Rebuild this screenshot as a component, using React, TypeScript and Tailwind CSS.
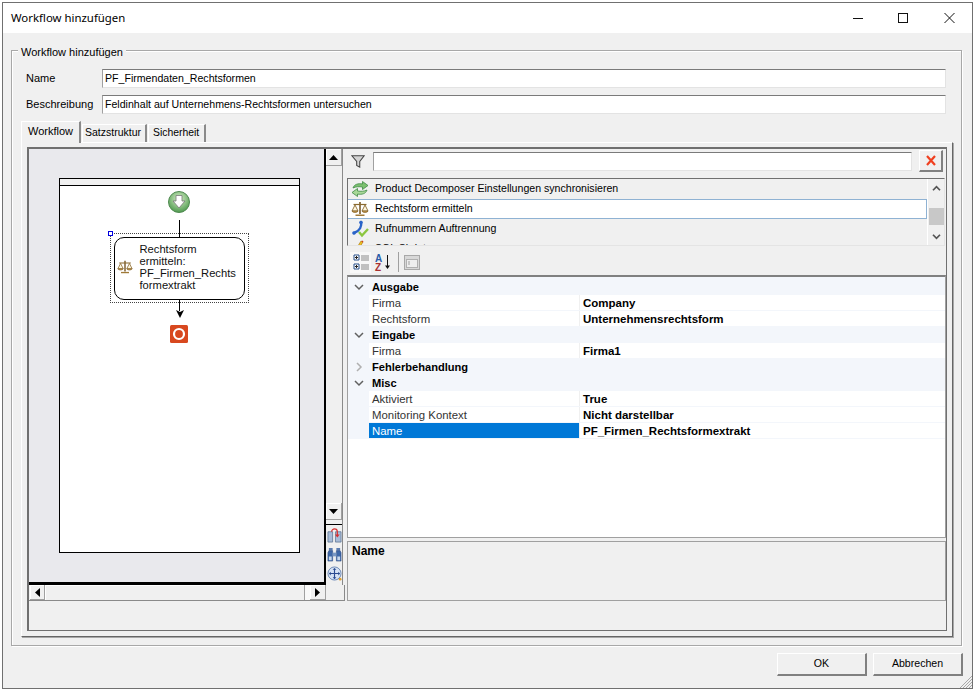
import React from "react";

const ui = "font-['Liberation_Sans',Arial,sans-serif] text-[11px]";

function Scales({ className = "" }: { className?: string }) {
  return (
    <svg viewBox="0 0 18 18" className={className}>
      <path d="M9 2v12" stroke="#7a5a28" strokeWidth="1.6" />
      <path d="M2.5 4.500h13" stroke="#8a6a30" strokeWidth="1.2" />
      <path d="M4 5 1 11h6zM14 5l-3 6h6z" fill="#fff7e0" stroke="#8a6a30" strokeWidth=".9" />
      <path d="M1 11c.6 2 5.400 2 6 0zM11 11c.6 2 5.400 2 6 0z" fill="#c89a48" stroke="#7a5a28" strokeWidth=".6" />
      <path d="M4.500 14.500h9v1.500h-9z" fill="#a07a38" />
    </svg>
  );
}

function Sync() {
  return (
    <svg viewBox="0 0 18 18" className="w-[18px] h-[18px]">
      <path d="M2 8c1-3.500 5-5 9.500-4V1.500L17 5.500l-5.500 4V7C8 6.500 5 6.500 2 8z" fill="#7cc070" stroke="#3f8a45" strokeWidth=".8" />
      <path d="M16 10c-1 3.500-5 5-9.500 4v2.500L1 12.500l5.500-4V11c3.500.5 6.500.5 9.500-1z" fill="#a8d898" stroke="#3f8a45" strokeWidth=".8" />
    </svg>
  );
}

function Phone() {
  return (
    <svg viewBox="0 0 18 18" className="w-[18px] h-[18px]">
      <path d="M10 2c1 4-1 9-7 11" fill="none" stroke="#2a63c8" strokeWidth="2.400" strokeLinecap="round" />
      <circle cx="10" cy="2.500" r="1.800" fill="#2a63c8" />
      <circle cx="3" cy="13" r="1.800" fill="#2a63c8" />
      <path d="m8 12 3 3.500 6-6.500" fill="none" stroke="#8cc63f" strokeWidth="2.400" />
    </svg>
  );
}

function Pencil() {
  return (
    <svg viewBox="0 0 18 18" className="w-[18px] h-[18px]">
      <path d="M10 1 5 9l2 1 5-8z" fill="#f0c020" stroke="#a07010" strokeWidth=".6" />
      <path d="M11 1l1 1" stroke="#d04020" strokeWidth="1.500" />
    </svg>
  );
}

function ArrowBtn({ dir, className = "" }: { dir: "up" | "down" | "left" | "right"; className?: string }) {
  const p = { up: "M0 5 4.500 0 9 5z", down: "M0 0h9L4.500 5z", left: "M5 0v9L0 4.500z", right: "M0 0v9l5-4.500z" }[dir];
  const box = dir === "up" || dir === "down" ? "0 0 9 5" : "0 0 5 9";
  const size = dir === "up" || dir === "down" ? "w-[9px] h-[5px]" : "w-[5px] h-[9px]";
  return (
    <div className={`flex items-center justify-center bg-[#f0f0f0] border-r border-b border-[#a0a0a0] shadow-[inset_1px_1px_0_#ffffff] shrink-0 ${className}`}>
      <svg viewBox={box} className={size}>
        <path d={p} fill="#000" />
      </svg>
    </div>
  );
}

function Category({ label, open = true }: { label: string; open?: boolean }) {
  return (
    <div className="h-[16px] flex items-center bg-[#f3f6fb] shrink-0">
      <div className="w-[21px] flex justify-center mr-[3px]">
        <svg viewBox="0 0 10 10" className="w-[10px] h-[10px]">
          {open ? (
            <path d="M1 3l4 4 4-4" fill="none" stroke="#606060" strokeWidth="1.500" />
          ) : (
            <path d="M3 1l4 4-4 4" fill="none" stroke="#b0b0b0" strokeWidth="1.500" />
          )}
        </svg>
      </div>
      <span className="font-bold text-black text-[11.1px]">{label}</span>
    </div>
  );
}

function Prop({ k, v, selected = false }: { k: string; v: string; selected?: boolean }) {
  return (
    <div className="h-[16px] flex bg-[#f3f6fb] shrink-0">
      <div className="w-[21px]" />
      <div className={`w-[211px] pl-[3px] leading-[17px] h-[15px] text-[11.4px] border-r border-[#f0f0f0] ${selected ? "bg-[#0078d7] text-white" : "bg-white text-[#333]"}`}>{k}</div>
      <div className="flex-1 pl-[3px] leading-[17px] h-[15px] bg-white font-bold text-black text-[11.5px]">{v}</div>
    </div>
  );
}

function SunkenInput({ value, className = "" }: { value: string; className?: string }) {
  return (
    <div className={`h-[19px] bg-white border border-[#e3e3e3] border-t-[#7a7a7a] border-l-[#a0a0a0] pl-[2px] leading-[17px] text-[10.6px] text-black whitespace-pre ${className}`}>
      {value}
    </div>
  );
}

export default function App() {
  const raised = "flex items-center justify-center bg-[#f0f0f0] border border-white border-r-2 border-b-2 border-r-[#808080] border-b-[#808080] text-black";
  return (
    <div className={`${ui} w-[978px] h-[693px] bg-white pt-[2px] pl-[2px] overflow-hidden text-[#111]`}>
      <div className="w-[971px] h-[687px] border border-[#707070] flex flex-col bg-[#f0f0f0]">
        {/* title bar */}
        <div className="h-[30px] bg-white flex items-center pl-[8px] shrink-0">
          <span className="flex-1 font-['Noto_Sans',sans-serif] text-[11.4px] text-black">Workflow hinzufügen</span>
          <div className="flex items-center pb-[1px] mr-[2px]">
            <svg viewBox="0 0 45 12" className="w-[45px] h-[12px]"><path d="M0 6.500h10" stroke="#111" /></svg>
            <svg viewBox="0 0 46 12" className="w-[46px] h-[12px]"><rect x="0.500" y="1.500" width="9" height="9" fill="none" stroke="#111" /></svg>
            <svg viewBox="0 0 24 12" className="w-[24px] h-[12px] mr-[2px]"><path d="M.5 1l10 10M10.500 1l-10 10" stroke="#111" /></svg>
          </div>
        </div>

        <div className="flex-1 flex flex-col px-[8px] pt-[17px]">
          {/* group box */}
          <div className="relative w-[951px] h-[596px] border border-[#a8a8a8] shadow-[inset_1px_1px_0_#ffffff,1px_1px_0_#ffffff] px-[9px] pt-[18px] shrink-0">
            <span className="absolute left-[6px] -top-[5px] bg-[#f0f0f0] px-[3px] leading-[13px] text-black">Workflow hinzufügen</span>

            <div className="flex items-center h-[19px] pl-[5px]">
              <span className="w-[76px] text-black">Name</span>
              <SunkenInput value="PF_Firmendaten_Rechtsformen" className="w-[844px]" />
            </div>
            <div className="flex items-center h-[19px] pl-[5px] mt-[7px]">
              <span className="w-[76px] text-black">Beschreibung</span>
              <SunkenInput value="Feldinhalt auf Unternehmens-Rechtsformen untersuchen" className="w-[844px]" />
            </div>

            {/* tabs */}
            <div className="flex items-end h-[21px] mt-[7px] gap-[1px]">
              <div className="w-[60px] h-[22px] -mb-px relative z-10 bg-[#f0f0f0] border-t border-l border-white border-r-2 border-r-[#8a8a8a] pl-[6px] leading-[19px] text-black">Workflow</div>
              <div className="w-[65px] h-[18px] bg-[#f0f0f0] border-t border-l border-white border-r-2 border-r-[#8a8a8a] pl-[2px] leading-[15px] text-[10.5px] text-black">Satzstruktur</div>
              <div className="w-[58px] h-[18px] bg-[#f0f0f0] border-t border-l border-white border-r-2 border-r-[#8a8a8a] pl-[4px] leading-[15px] text-[10.4px] text-black">Sicherheit</div>
            </div>

            {/* tab panel */}
            <div className="w-[932px] h-[495px] border-t border-l border-white border-r border-b border-r-[#666666] border-b-[#666666] shadow-[1px_1px_0_#a8a8a8] px-[5px] pt-[4px]">
              <div className="w-[920px] h-[484px] border-t-2 border-l-2 border-r border-b border-[#707070] flex">
                {/* designer */}
                <div className="w-[316px] flex flex-col shrink-0">
                  <div className="flex h-[436px]">
                    <div className="w-[297px] bg-[#e9e9ed] border-r-2 border-b-[3px] border-black pl-[30px] pt-[29px] relative">
                      <div className="w-[241px] h-[375px] bg-white border border-black relative">
                        <div className="h-[7px] bg-[#f0f0f0] border-b border-black" />

                        {/* diagram */}
                        <svg viewBox="0 0 24 24" className="absolute left-[107px] top-[11px] w-[24px] h-[24px]">
                          <defs>
                            <radialGradient id="g" cx="50%" cy="35%" r="65%">
                              <stop offset="0" stopColor="#d8f0c8" />
                              <stop offset="1" stopColor="#4f9a4f" />
                            </radialGradient>
                          </defs>
                          <circle cx="12" cy="12" r="10.500" fill="url(#g)" stroke="#4f8a50" />
                          <path d="M9 5.500h6v5.500h3l-6 7-6-7h3z" fill="#fff" stroke="#777" strokeWidth=".8" />
                        </svg>
                        <div className="absolute left-[119px] top-[41px] w-[1px] h-[17px] bg-black" />
                        <div className="absolute left-[50px] top-[54px] w-[139px] h-[70px] border border-dotted border-[#444]" />
                        <div className="absolute left-[48px] top-[52px] w-[5px] h-[5px] bg-white border border-[#0000e0]" />
                        <div className="absolute left-[54px] top-[58px] w-[131px] h-[63px] border-[1.5px] border-black rounded-[10px] bg-white flex items-center pl-[24.500px] pb-[4px]">
                          <div className="absolute left-[2px] top-[21px]">
                            <Scales className="w-[16px] h-[16px]" />
                          </div>
                          <div className="leading-[12px] text-[11.2px] text-[#111] whitespace-nowrap">
                            Rechtsform<br />ermitteln:<br />PF_Firmen_Rechts<br />formextrakt
                          </div>
                        </div>
                        <div className="absolute left-[119px] top-[121px] w-[1px] h-[11px] bg-black" />
                        <svg viewBox="0 0 8 8" className="absolute left-[116px] top-[131px] w-[8px] h-[8px]"><path d="M0 0 4 2 8 0 4 8z" fill="#000" /></svg>
                        <svg viewBox="0 0 18 18" className="absolute left-[110px] top-[146px] w-[18px] h-[18px]">
                          <rect width="18" height="18" rx="1.500" fill="#d8481f" />
                          <circle cx="9" cy="9" r="5" fill="none" stroke="#fff" strokeWidth="2.200" />
                        </svg>
                      </div>
                    </div>
                    <div className="w-[17px] flex flex-col bg-[#f0f0f0] shrink-0 border-r border-[#8a8a8a]">
                      <ArrowBtn dir="up" className="h-[17px]" />
                      <div className="h-[337px] shrink-0" />
                      <ArrowBtn dir="down" className="h-[17px]" />
                      <div className="h-[5px] border-b border-black shrink-0" />
                      <div className="flex-1 flex flex-col items-center gap-[4px] pt-[3px]">
                        <svg viewBox="0 0 16 16" className="w-[15px] h-[15px]">
                          <path d="M1 4h5v11H1zM9 4h6v11H9z" fill="#a8bcd8" stroke="#5a7090" strokeWidth=".8" />
                          <path d="M5 4c0-4 6-4 6 0v4" fill="none" stroke="#d83030" strokeWidth="1.300" />
                          <path d="m8.500 7 2.500 3 2.500-3z" fill="#d83030" />
                        </svg>
                        <svg viewBox="0 0 16 16" className="w-[15px] h-[15px]">
                          <path d="M2 1h4v3H2zM10 1h4v3h-4z" fill="#5a7cb0" />
                          <path d="M1 6l1-2h4v11H1zM15 6l-1-2h-4v11h5z" fill="#3f68a8" stroke="#2a4a80" strokeWidth=".6" />
                          <path d="M6 6h4v4H6z" fill="#7a98c4" />
                          <path d="M2 10h3v4H2zM11 10h3v4h-3z" fill="#c8d8ec" />
                        </svg>
                        <svg viewBox="0 0 16 16" className="w-[15px] h-[15px]">
                          <circle cx="8" cy="8" r="7" fill="#d6e2f4" stroke="#6a86b4" />
                          <path d="M8 3v10M3 8h10" stroke="#2a4a90" strokeWidth="1.200" />
                          <path d="M8 2l2 2H6zM8 14l2-2H6zM2 8l2-2v4zM14 8l-2-2v4z" fill="#2a4a90" />
                          <circle cx="14" cy="14" r="1.500" fill="#e0a030" />
                        </svg>
                      </div>
                    </div>
                  </div>
                  <div className="flex h-[16px] border-b border-[#8a8a8a] shrink-0">
                    <div className="w-px" />
                    <ArrowBtn dir="left" className="w-[15px] h-[15px]" />
                    <div className="w-[260px] bg-[#f0f0f0] border-r border-[#a0a0a0] shadow-[inset_1px_1px_0_#ffffff]" />
                    <div className="w-[5px] bg-[#f8f8f8]" />
                    <ArrowBtn dir="right" className="w-[16px] h-[15px]" />
                    <div className="flex-1 border-r border-[#8a8a8a]" />
                  </div>
                </div>

                {/* right pane */}
                <div className="flex-1 flex flex-col min-w-0">
                  <div className="flex items-center h-[24px]">
                    <svg viewBox="0 0 16 16" className="w-[14px] h-[14px] ml-[6px]">
                      <path d="M1 2h14L10 8.500V15L6.500 13V8.500z" fill="#d4d4d4" stroke="#444" strokeWidth="1.200" />
                    </svg>
                    <SunkenInput value="" className="w-[539px] ml-[8px]" />
                    <div className={`w-[24px] h-[22px] ml-[7px] ${raised}`}>
                      <svg viewBox="0 0 10 11" className="w-[10px] h-[11px]">
                        <path d="M1 1l8 9M9 1l-8 9" stroke="#f04020" strokeWidth="2.200" />
                      </svg>
                    </div>
                  </div>

                  {/* list */}
                  <div className="h-[68px] w-[598px] mt-[5px] ml-[2px] border-t border-l border-[#707070] border-b border-b-[#e4e4e4] border-r border-r-[#e4e4e4] flex overflow-hidden text-[10.6px] text-black">
                    <div className="w-[579px] flex flex-col">
                      <div className="h-[20px] flex items-center shrink-0"><span className="w-[27px] pl-[3px] flex"><Sync /></span>Product Decomposer Einstellungen synchronisieren</div>
                      <div className="h-[20px] flex items-center shrink-0 bg-white border border-[#8fb2d3] -ml-px"><span className="w-[27px] pl-[3px] flex"><Scales className="w-[18px] h-[18px]" /></span>Rechtsform ermitteln</div>
                      <div className="h-[20px] flex items-center shrink-0"><span className="w-[27px] pl-[3px] flex"><Phone /></span>Rufnummern Auftrennung</div>
                      <div className="h-[20px] flex items-center shrink-0"><span className="w-[27px] pl-[3px] flex"><Pencil /></span>SQL Skript</div>
                    </div>
                    <div className="w-[17px] border-l border-white flex flex-col items-center bg-[#f0f0f0]">
                      <svg viewBox="0 0 10 8" className="w-[9px] h-[7px] mt-[6px]"><path d="M1 6l4-4 4 4" fill="none" stroke="#555" strokeWidth="2" /></svg>
                      <div className="w-[15px] h-[17px] bg-[#c8c8c8] mt-[16px]" />
                      <svg viewBox="0 0 10 8" className="w-[9px] h-[7px] mt-[8px]"><path d="M1 2l4 4 4-4" fill="none" stroke="#555" strokeWidth="2" /></svg>
                    </div>
                  </div>

                  {/* toolbar */}
                  <div className="h-[26px] flex items-center ml-[5px] mt-[3px] shrink-0">
                    <div className="w-[21px] h-[21px] bg-[#f8f8f8] flex items-center justify-center">
                      <svg viewBox="0 0 18 18" className="w-[18px] h-[18px]">
                        <path d="M2 2h5v5H2zM2 11h5v5H2z" fill="#fff" stroke="#29508a" />
                        <path d="M3 4.500h3M4.500 3v3M3 13.500h3M4.500 12v3" stroke="#222" />
                        <path d="M9 3h8M9 5h8M9 7h8M9 12h8M9 14h8M9 16h8" stroke="#8a8a8a" />
                      </svg>
                    </div>
                    <svg viewBox="0 0 17 18" className="w-[17px] h-[18px] ml-[3px]">
                      <text x="1" y="8.500" fontSize="10" fontWeight="bold" fill="#2a5ca8" fontFamily="'Liberation Sans'">A</text>
                      <text x="1" y="17.500" fontSize="10" fontWeight="bold" fill="#a83030" fontFamily="'Liberation Sans'">Z</text>
                      <path d="M13.500 2v13" stroke="#111" />
                      <path d="M11 12.500h5l-2.500 3.500z" fill="#111" />
                    </svg>
                    <div className="w-px h-[20px] bg-[#a0a0a0] ml-[7px]" />
                    <svg viewBox="0 0 16 15" className="w-[16px] h-[15px] ml-[5px]">
                      <rect x=".5" y=".5" width="15" height="14" fill="#d8d8d8" stroke="#a8a8a8" />
                      <rect x="2.500" y="4.500" width="11" height="8" fill="#eee" stroke="#b0b0b0" />
                      <path d="M4 7h2M4 9h2" stroke="#a0a0a0" />
                    </svg>
                  </div>

                  {/* grid */}
                  <div className="w-[599px] h-[263px] ml-[2px] border-t-2 border-l border-r border-b border-[#a0a0a0] border-t-[#808080] bg-white flex flex-col overflow-hidden shrink-0">
                    <div className="h-[2px] bg-[#f3f6fb] shrink-0" />
                    <Category label="Ausgabe" />
                    <Prop k="Firma" v="Company" />
                    <Prop k="Rechtsform" v="Unternehmensrechtsform" />
                    <Category label="Eingabe" />
                    <Prop k="Firma" v="Firma1" />
                    <Category label="Fehlerbehandlung" open={false} />
                    <Category label="Misc" />
                    <Prop k="Aktiviert" v="True" />
                    <Prop k="Monitoring Kontext" v="Nicht darstellbar" />
                    <Prop k="Name" v="PF_Firmen_Rechtsformextrakt" selected />
                  </div>

                  {/* description */}
                  <div className="w-[599px] h-[60px] ml-[2px] mt-[3px] border border-[#a0a0a0] px-[4px] font-bold text-[12px] text-black shrink-0">Name</div>
                </div>
              </div>
            </div>
          </div>

          {/* buttons */}
          <div className="flex justify-end gap-[6px] mt-[7px] pr-[1px] text-[10.6px]">
            <div className={`w-[90px] h-[23px] ${raised}`}>OK</div>
            <div className={`w-[90px] h-[23px] ${raised}`}>Abbrechen</div>
          </div>
          <div className="relative">
            <svg viewBox="0 0 12 12" className="absolute right-[-8px] top-[0px] w-[12px] h-[12px]">
              <path d="M12 0 0 12M12 3 3 12M12 6 6 12M12 9l-3 3" stroke="#a8a8a8" strokeWidth="1" />
            </svg>
          </div>
        </div>
      </div>
    </div>
  );
}
